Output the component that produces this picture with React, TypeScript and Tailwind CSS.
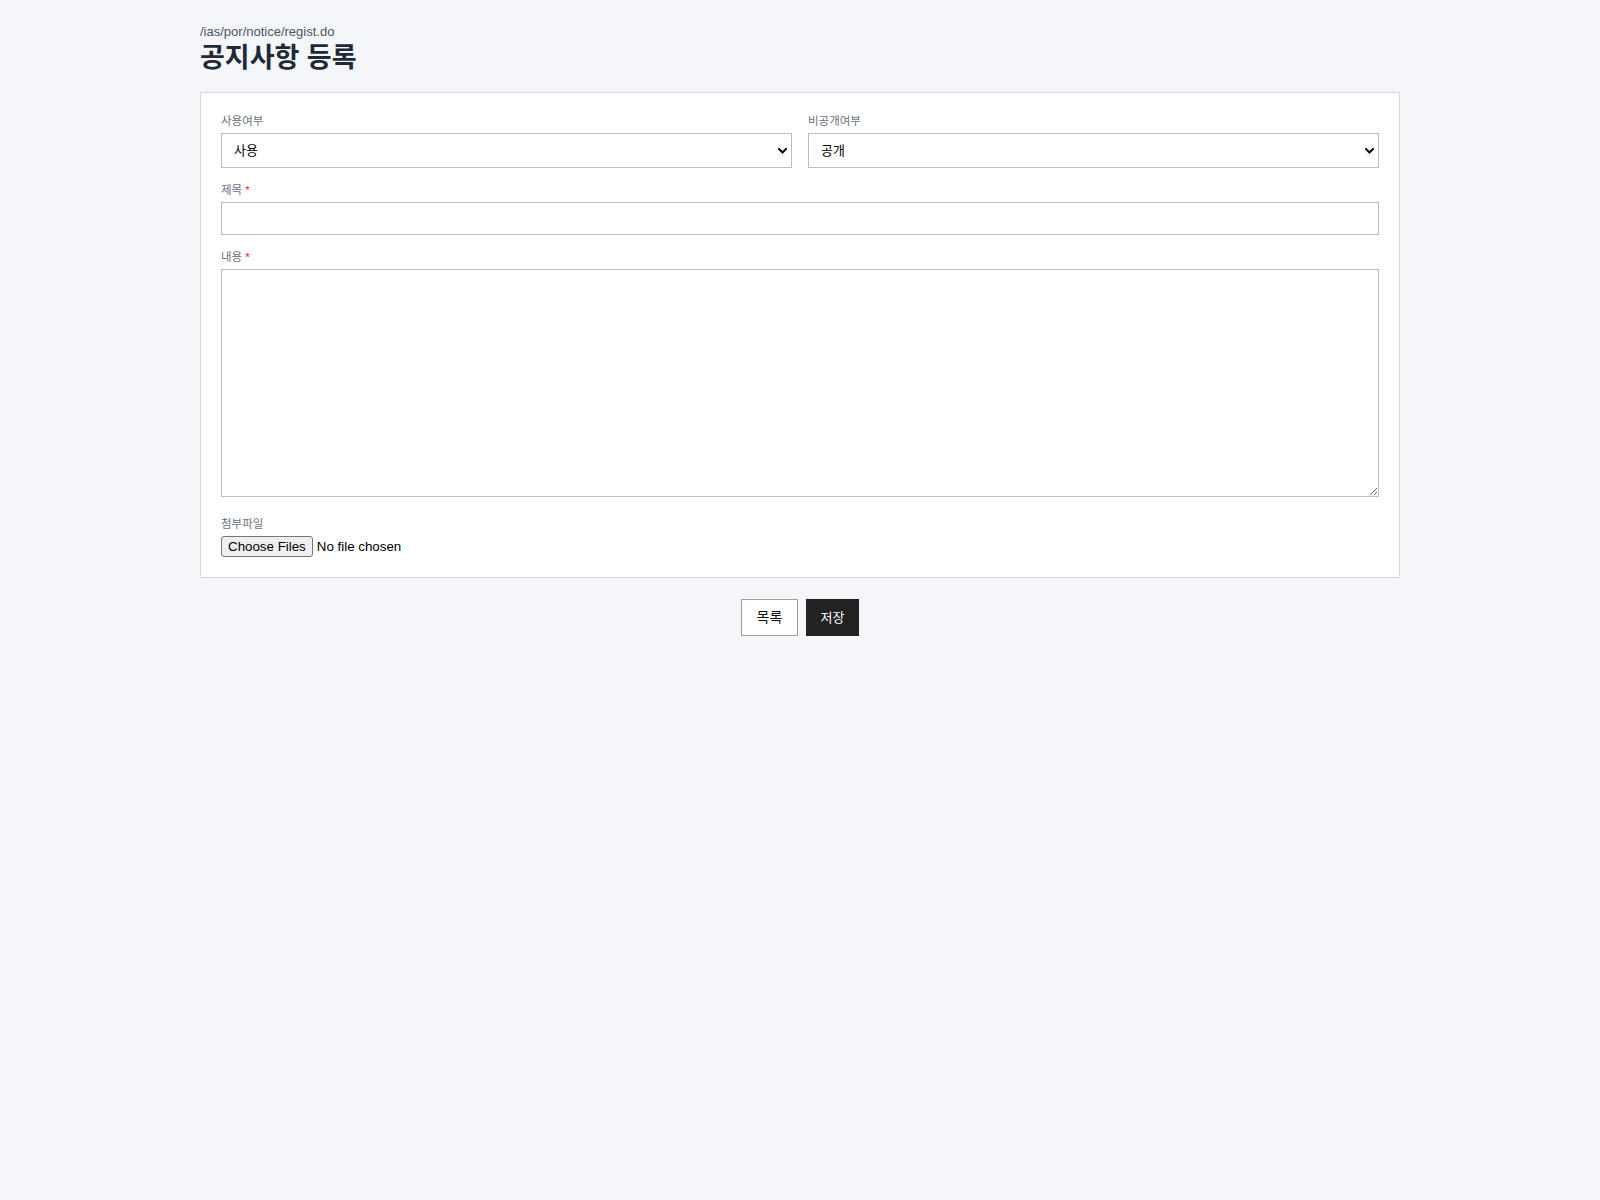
import React from "react";

const font = { fontFamily: '"Liberation Sans", "Noto Sans CJK KR", sans-serif' };

function Chevron() {
  return (
    <svg
      className="pointer-events-none absolute right-[5px] top-1/2 -translate-y-1/2"
      width="9"
      height="7"
      viewBox="0 0 9 7"
      fill="none"
    >
      <path d="M1 1.5 L4.5 5 L8 1.5" stroke="#111" strokeWidth="2.2" strokeLinecap="square" />
    </svg>
  );
}

function Label({ children, required }: { children: React.ReactNode; required?: boolean }) {
  return (
    <label className="mb-1 block text-[11.5px] leading-4 text-[#6b7280]">
      {children}
      {required && <span className="ml-[3px] text-[#e02424]">*</span>}
    </label>
  );
}

export default function App() {
  return (
    <div className="min-h-[1200px] w-full bg-[#f5f6fa] pt-6" style={font}>
      <div className="mx-auto w-[1200px]">
        <div className="text-[13px] leading-4 text-[#4b5563]">/ias/por/notice/regist.do</div>
        <h1 className="mb-4 text-[27px] font-bold leading-9 text-[#1f2937]">공지사항 등록</h1>

        <div className="flex flex-col gap-[14px] border border-[#d8dadf] bg-white p-5">
          <div className="grid grid-cols-2 gap-4">
            <div>
              <Label>사용여부</Label>
              <div className="relative">
                <select className="block h-[35px] w-full appearance-none border border-[#bdbdbd] bg-white pl-3 pr-6 text-[13px] text-black outline-none">
                  <option>사용</option>
                  <option>미사용</option>
                </select>
                <Chevron />
              </div>
            </div>
            <div>
              <Label>비공개여부</Label>
              <div className="relative">
                <select className="block h-[35px] w-full appearance-none border border-[#bdbdbd] bg-white pl-3 pr-6 text-[13px] text-black outline-none">
                  <option>공개</option>
                  <option>비공개</option>
                </select>
                <Chevron />
              </div>
            </div>
          </div>

          <div>
            <Label required>제목</Label>
            <input type="text" className="block h-[33px] w-full border border-[#bdbdbd] bg-white px-3 text-[13px] outline-none" />
          </div>

          <div>
            <Label required>내용</Label>
            <textarea className="block h-[228px] w-full resize-y border border-[#bdbdbd] bg-white p-3 text-[13px] outline-none" />
          </div>

          <div className="mt-[5px]">
            <Label>첨부파일</Label>
            <input
              type="file"
              multiple
              className="block text-[13.33px] leading-[17px] text-black file:mr-[4px] file:rounded-[3px] file:border file:border-solid file:border-[#767676] file:bg-[#efefef] file:px-[6px] file:py-[1px] file:text-black"
            />
          </div>
        </div>

        <div className="mt-[21px] flex justify-center gap-2">
          <button className="h-[37px] w-[57px] border border-[#9e9e9e] bg-white text-[14px] text-[#111]">목록</button>
          <button className="h-[37px] w-[53px] bg-[#222222] text-[13px] text-white">저장</button>
        </div>
      </div>
    </div>
  );
}
